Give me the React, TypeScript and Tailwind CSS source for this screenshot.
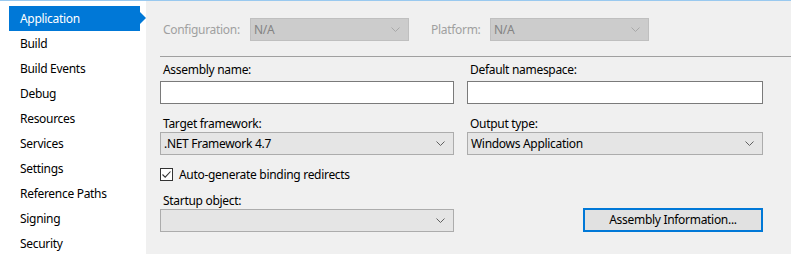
const pages = [
  'Application',
  'Build',
  'Build Events',
  'Debug',
  'Resources',
  'Services',
  'Settings',
  'Reference Paths',
  'Signing',
  'Security',
]

function Chevron({ color = '#606060' }: { color?: string }) {
  return (
    <svg width="9" height="5" viewBox="0 0 9 5" className="shrink-0">
      <path d="M0.5 0.5 L4.5 4.5 L8.5 0.5" fill="none" stroke={color} strokeWidth="1" />
    </svg>
  )
}

function Combo({ value, disabled, className = '' }: { value?: string; disabled?: boolean; className?: string }) {
  return (
    <div
      className={`h-[23px] flex items-center justify-between pl-[3px] pr-[8px] border ${
        disabled ? 'bg-[#cccccc] border-[#bfbfbf] text-[#838383]' : 'bg-[#e5e5e5] border-[#acacac] text-black'
      } ${className}`}
    >
      <span className="leading-none">{value}</span>
      <Chevron color={disabled ? '#a8a8a8' : '#606060'} />
    </div>
  )
}

function Label({ children }: { children: React.ReactNode }) {
  return <div className="h-4 leading-4 pl-[3px]">{children}</div>
}

export default function App() {
  return (
    <div
      className="w-[791px] h-[254px] flex border-t border-[#99c9ef] text-[12px] tracking-[-0.3px] text-black overflow-hidden"
      style={{ fontFamily: '"Segoe UI", "Noto Sans", sans-serif' }}
    >
      {/* Page tabs */}
      <div className="w-[146px] bg-white pt-[5px] pl-[9px]">
        {pages.map((p, i) =>
          i === 0 ? (
            <div key={p} className="relative w-[131px] h-[25px] bg-[#0078d7] text-white flex items-center pl-[11px]">
              {p}
              <div className="absolute left-full top-[6px] w-0 h-0 border-y-[6px] border-y-transparent border-l-[6px] border-l-[#0078d7]" />
            </div>
          ) : (
            <div key={p} className="h-[25px] flex items-center pl-[11px]">
              {p}
            </div>
          ),
        )}
      </div>

      {/* Properties */}
      <div className="flex-1 bg-[#f0f0f0]">
        <div className="flex items-center h-[23px] mt-[17px] pl-[17px]">
          <span className="text-[#a0a0a0] w-[87px]">Configuration:</span>
          <Combo value="N/A" disabled className="w-[159px]" />
          <span className="text-[#a0a0a0] ml-[22px] w-[59px]">Platform:</span>
          <Combo value="N/A" disabled className="w-[159px]" />
        </div>

        <div className="h-px bg-[#a0a0a0] ml-[14px] mt-[15px]" />

        <div className="grid grid-cols-[294px_296px] gap-x-[13px] pl-[14px] pt-[5px]">
          <div>
            <Label>Assembly name:</Label>
            <div className="h-[23px] mt-[3px] bg-white border border-[#7a7a7a]" />
          </div>
          <div>
            <Label>Default namespace:</Label>
            <div className="h-[23px] mt-[3px] bg-white border border-[#7a7a7a]" />
          </div>

          <div className="mt-[12px]">
            <Label>Target framework:</Label>
            <Combo value=".NET Framework 4.7" />
          </div>
          <div className="mt-[12px]">
            <Label>Output type:</Label>
            <Combo value="Windows Application" />
          </div>

          <div className="col-span-2 flex items-center mt-[13px] h-[13px]">
            <div className="w-[13px] h-[13px] border border-[#333333] bg-white flex items-center justify-center">
              <svg width="11" height="11" viewBox="0 0 11 11">
                <path d="M1.5 5.5 L4.2 8.2 L9.5 2.5" fill="none" stroke="#333333" strokeWidth="1.1" />
              </svg>
            </div>
            <span className="ml-[6px]">Auto-generate binding redirects</span>
          </div>

          <div className="mt-[12px]">
            <Label>Startup object:</Label>
            <Combo />
          </div>
          <div className="flex items-end justify-end">
            <button className="w-[180px] h-[24px] bg-[#e1e1e1] border-2 border-[#0078d7] text-black leading-none">
              Assembly Information...
            </button>
          </div>
        </div>
      </div>
    </div>
  )
}
